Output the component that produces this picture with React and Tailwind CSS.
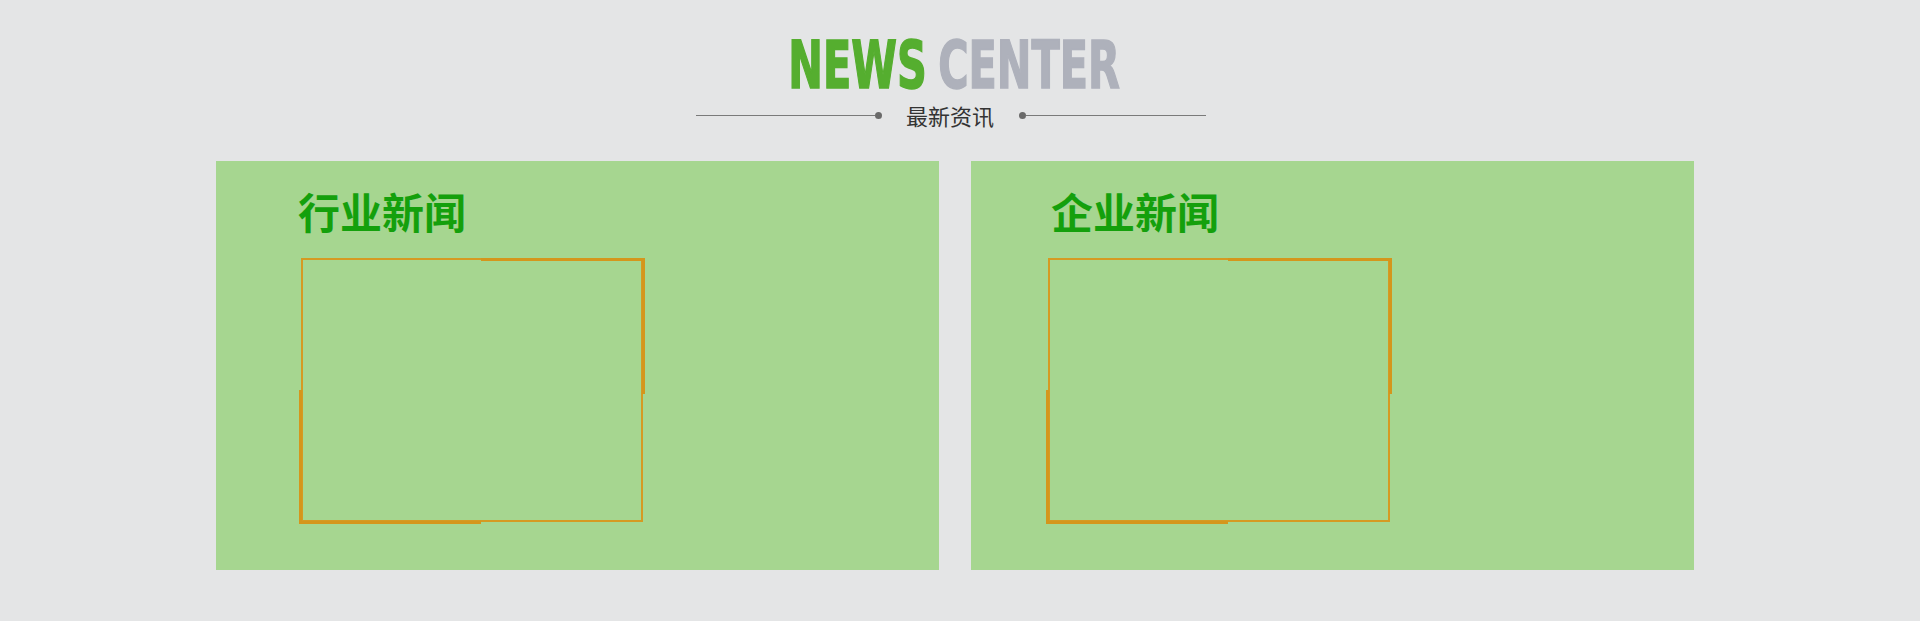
import React from 'react';

const panels = [
  { title: '行业新闻', headPad: 'pl-[82px]', framePad: 'pl-[85px]' },
  { title: '企业新闻', headPad: 'pl-[80px]', framePad: 'pl-[77px]' },
];

function NewsPanel({ title, headPad, framePad }) {
  return (
    <div className="w-[723px] h-[409px] bg-[#a6d690]">
      <h3
        className={`${headPad} pt-[29px] text-[42px] leading-none font-bold text-[#14a00c]`}
        style={{ fontFamily: '"Noto Sans CJK SC", sans-serif' }}
      >
        {title}
      </h3>
      <div className={`${framePad} pt-[26px]`}>
        <div className="relative w-[342px] h-[264px] border-2 border-[#d59a22]">
          {/* thick corner brackets */}
          <div className="absolute -top-[2px] -right-[4px] w-[164px] h-[136px] border-t-[3px] border-r-[3px] border-[#d4961c]"></div>
          <div className="absolute -bottom-[4px] -left-[4px] w-[182px] h-[134px] border-b-[3px] border-l-[3px] border-[#d4961c]"></div>
        </div>
      </div>
    </div>
  );
}

export default function App() {
  return (
    <div className="w-full h-[621px] bg-[#e4e5e6] flex flex-col">
      <section className="pt-[42px] flex flex-col items-center pr-[11px]">
        <h2
          className="h-[48px] text-[65px] leading-[48px] font-bold whitespace-nowrap scale-x-[0.708] [-webkit-text-stroke:1.5px_currentColor]"
          style={{ fontFamily: '"DejaVu Sans Condensed", "DejaVu Sans", sans-serif' }}
        >
          <span className="text-[#55ae2f]">NEWS</span>
          <span className="inline-block w-[16px]"></span>
          <span className="text-[#aeb1bb]">CENTER</span>
        </h2>
        <div className="mt-[14px] mr-[7px] h-[22px] flex items-center">
          <div className="w-[179px] h-px bg-[#7a7a7a]"></div>
          <div className="w-[7px] h-[7px] rounded-full bg-[#6a6a6a]"></div>
          <span
            className="pl-[24px] pr-[25px] text-[22px] leading-none text-[#333]"
            style={{ fontFamily: '"Noto Sans CJK SC", sans-serif' }}
          >
            最新资讯
          </span>
          <div className="w-[7px] h-[7px] rounded-full bg-[#6a6a6a]"></div>
          <div className="w-[180px] h-px bg-[#7a7a7a]"></div>
        </div>
      </section>

      <div className="mt-[35px] pl-[216px] flex gap-[32px]">
        {panels.map((p) => (
          <NewsPanel key={p.title} {...p} />
        ))}
      </div>
    </div>
  );
}
